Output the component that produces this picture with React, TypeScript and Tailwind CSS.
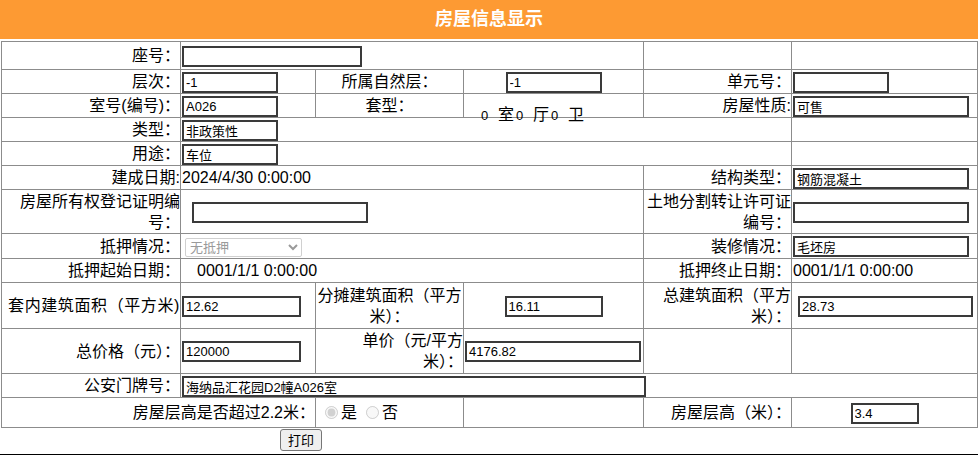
import React from 'react';

const font = { fontFamily: '"Liberation Sans", "Noto Sans CJK SC", sans-serif' };

const Field: React.FC<{ value?: string; className?: string }> = ({ value = '', className = '' }) => (
  <input
    readOnly
    value={value}
    className={`h-[21px] border-2 border-[#3a3a3a] bg-white px-[2px] text-[13px] leading-[15px] text-black outline-none align-middle ${className}`}
  />
);

const td = 'border border-[#8c8c8c] p-0 align-middle';
const label = `${td} text-right`;

const App: React.FC = () => {
  return (
    <div className="w-[978px] h-[457px] bg-white text-black text-[16px] leading-[21px]" style={font}>
      <div className="h-[39px] bg-[#fd9a33] flex items-center justify-center text-white text-[18px] font-bold">
        房屋信息显示
      </div>

      <table className="mt-[2px] ml-px w-[976px] table-fixed border-collapse border border-[#8c8c8c]">
        <colgroup>
          <col className="w-[179px]" />
          <col className="w-[135px]" />
          <col className="w-[148px]" />
          <col className="w-[180px]" />
          <col className="w-[148px]" />
          <col className="w-[186px]" />
        </colgroup>
        <tbody>
          <tr className="h-[28px]">
            <td className={label}>座号：</td>
            <td className={td} colSpan={3}><Field className="w-[180px] ml-px" /></td>
            <td className={td}></td>
            <td className={td}></td>
          </tr>
          <tr className="h-[24px]">
            <td className={label}>层次：</td>
            <td className={td}><Field value="-1" className="w-[96px] ml-px" /></td>
            <td className={`${td} text-center`}>所属自然层：</td>
            <td className={`${td} text-center`}><Field value="-1" className="w-[96px]" /></td>
            <td className={label}>单元号：</td>
            <td className={td}><Field className="w-[96px] ml-px" /></td>
          </tr>
          <tr className="h-[24px]">
            <td className={label}>室号(编号)：</td>
            <td className={td}><Field value="A026" className="w-[96px] ml-px" /></td>
            <td className={`${td} text-center`}>套型：</td>
            <td className={td}>
              <div className="pl-[17px] translate-y-[9px] whitespace-nowrap">
                <span className="inline-block w-[17px] text-[13px]">0</span>
                <span>室</span>
                <span className="inline-block w-[17px] ml-[2px] text-[13px]">0</span>
                <span>厅</span>
                <span className="inline-block w-[17px] ml-[2px] text-[13px]">0</span>
                <span>卫</span>
              </div>
            </td>
            <td className={label}>房屋性质:</td>
            <td className={td}><Field value="可售" className="w-[176px] ml-px" /></td>
          </tr>
          <tr className="h-[24px]">
            <td className={label}>类型：</td>
            <td className={td} colSpan={4}><Field value="非政策性" className="w-[96px] ml-px" /></td>
            <td className={td}></td>
          </tr>
          <tr className="h-[24px]">
            <td className={label}>用途：</td>
            <td className={td} colSpan={4}><Field value="车位" className="w-[96px] ml-px" /></td>
            <td className={td}></td>
          </tr>
          <tr className="h-[24px]">
            <td className={label}>建成日期:</td>
            <td className={`${td} pl-px`} colSpan={3}>2024/4/30 0:00:00</td>
            <td className={label}>结构类型：</td>
            <td className={td}><Field value="钢筋混凝土" className="w-[176px] ml-px" /></td>
          </tr>
          <tr className="h-[44px]">
            <td className={label}>房屋所有权登记证明编号：</td>
            <td className={td} colSpan={3}><Field className="w-[176px] ml-[11px]" /></td>
            <td className={label}>土地分割转让许可证编号：</td>
            <td className={td}><Field className="w-[176px] ml-px" /></td>
          </tr>
          <tr className="h-[25px]">
            <td className={label}>抵押情况：</td>
            <td className={td} colSpan={3}>
              <select
                disabled
                defaultValue="无抵押"
                className="ml-[4px] h-[19px] w-[117px] border border-[#d0d0d0] rounded-[2px] bg-white text-[13px] text-[#9a9a9a] align-middle"
              >
                <option>无抵押</option>
              </select>
            </td>
            <td className={label}>装修情况：</td>
            <td className={td}><Field value="毛坯房" className="w-[176px] ml-px" /></td>
          </tr>
          <tr className="h-[24px]">
            <td className={label}>抵押起始日期：</td>
            <td className={`${td} pl-[16px]`} colSpan={3}>0001/1/1 0:00:00</td>
            <td className={label}>抵押终止日期：</td>
            <td className={`${td} pl-px`}>0001/1/1 0:00:00</td>
          </tr>
          <tr className="h-[46px]">
            <td className={`${label} tracking-[0.6px]`}>套内建筑面积（平方米)</td>
            <td className={td}><Field value="12.62" className="w-[119px] ml-px" /></td>
            <td className={`${td} text-center`}>分摊建筑面积（平方米）：</td>
            <td className={`${td} text-center`}><Field value="16.11" className="w-[98px]" /></td>
            <td className={label}>总建筑面积（平方米）：</td>
            <td className={td}><Field value="28.73" className="w-[175px] ml-[6px]" /></td>
          </tr>
          <tr className="h-[45px]">
            <td className={label}>总价格（元）：</td>
            <td className={td}><Field value="120000" className="w-[119px] ml-px" /></td>
            <td className={label}>单价（元/平方<br />米）：</td>
            <td className={td}><Field value="4176.82" className="w-[176px] ml-px" /></td>
            <td className={td}></td>
            <td className={td}></td>
          </tr>
          <tr className="h-[24px]">
            <td className={label}>公安门牌号：</td>
            <td className={td} colSpan={5}><Field value="海纳品汇花园D2幢A026室" className="w-[464px] ml-px" /></td>
          </tr>
          <tr className="h-[30px]">
            <td className={label} colSpan={2}>房屋层高是否超过2.2米：</td>
            <td className={`${td} pl-[9px]`}>
              <label className="inline-flex items-center">
                <input type="radio" name="h" disabled defaultChecked className="w-[13px] h-[13px] m-0 mr-[3px]" />
                是
              </label>
              <label className="inline-flex items-center ml-[9px]">
                <input type="radio" name="h" disabled className="w-[13px] h-[13px] m-0 mr-[3px]" />
                否
              </label>
            </td>
            <td className={td}></td>
            <td className={label}>房屋层高（米）：</td>
            <td className={`${td} text-center`}><Field value="3.4" className="w-[68px]" /></td>
          </tr>
        </tbody>
      </table>

      <button className="mt-px ml-[280px] h-[22px] w-[42px] border border-[#767676] rounded-[3px] bg-[#efefef] text-[13px] leading-[15px] text-black">
        打印
      </button>
      <div className="mt-[3px] border-t border-black" />
    </div>
  );
};

export default App;
